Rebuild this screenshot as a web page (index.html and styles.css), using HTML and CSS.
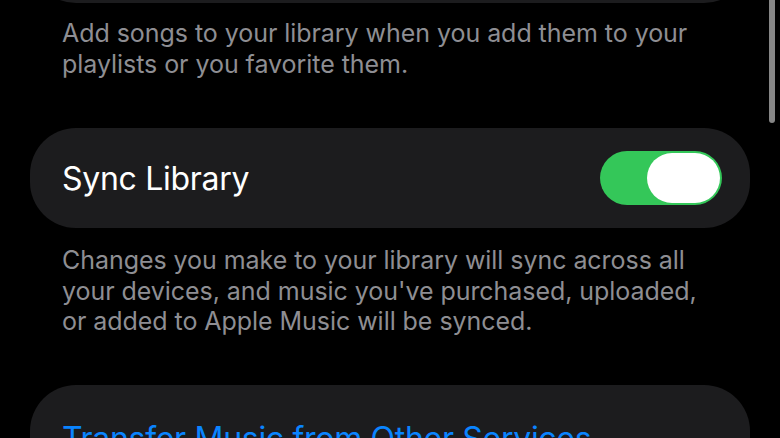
FILE: index.html
```html
<!DOCTYPE html>
<html>
<head>
<meta charset="utf-8">
<link rel="stylesheet" href="styles.css">
</head>
<body>
<div class="screen">
  <div class="card card-prev"></div>
  <p class="footer footer-first">Add songs to your library when you add them to your<br>playlists or you favorite them.</p>
  <div class="card row">
    <span class="label">Sync Library</span>
    <span class="toggle"><span class="knob"></span></span>
  </div>
  <p class="footer footer-second">Changes you make to your library will sync across all<br>your devices, and music you've purchased, uploaded,<br>or added to Apple Music will be synced.</p>
  <div class="card row link-row">
    <span class="link">Transfer Music from Other Services</span>
  </div>
  <div class="scroll-indicator"></div>
</div>
</body>
</html>
```
FILE: styles.css
```css
html, body {
  margin: 0;
  padding: 0;
  background: #000;
}
.screen {
  position: relative;
  width: 780px;
  height: 438px;
  overflow: hidden;
  font-family: Inter, "Noto Sans", sans-serif;
  display: flex;
  flex-direction: column;
}
.card {
  background: #1c1c1e;
  margin: 0 30px;
  border-radius: 46px;
  flex-shrink: 0;
}
.card-prev {
  height: 100px;
  margin-top: -97px;
}
.footer {
  margin: 0;
  padding: 0 40px 0 62px;
  color: #8e8e93;
  font-size: 25px;
  line-height: 31px;
  letter-spacing: -0.05px;
  white-space: nowrap;
}
.footer-first {
  margin-top: 15px;
  margin-bottom: 48px;
}
.row {
  height: 100px;
  display: flex;
  align-items: center;
  justify-content: space-between;
  padding: 0 28px 0 32px;
}
.label {
  color: #fff;
  font-size: 32px;
  letter-spacing: -0.3px;
}
.toggle {
  width: 122px;
  height: 54px;
  border-radius: 27px;
  background: #34c759;
  display: flex;
  align-items: center;
  justify-content: flex-end;
  padding: 0 2px;
  box-sizing: border-box;
}
.knob {
  width: 73px;
  height: 50px;
  border-radius: 25px;
  background: #fff;
}
.footer-second {
  margin-top: 17px;
  line-height: 30.5px;
}
.link-row {
  margin-top: 48px;
  height: 120px;
  align-items: flex-start;
  padding-top: 34px;
  box-sizing: border-box;
}
.link {
  color: #0a84ff;
  font-size: 32px;
  letter-spacing: -0.3px;
}
.scroll-indicator {
  position: absolute;
  left: 769px;
  top: -10px;
  width: 6px;
  height: 133px;
  border-radius: 3px;
  background: #868686;
}
```
